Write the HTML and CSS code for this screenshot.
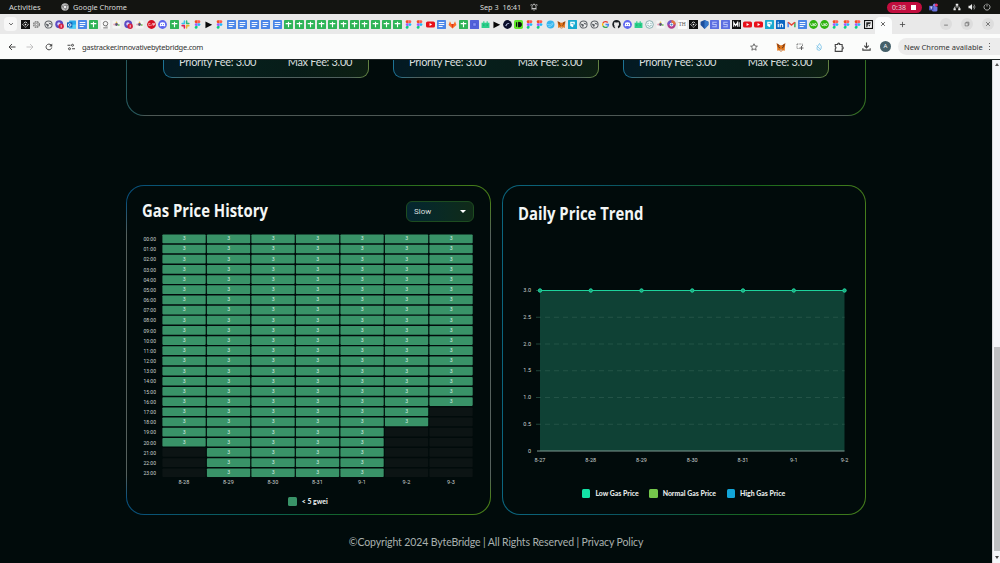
FILE: index.html
```html
<!DOCTYPE html>
<html lang="en">
<head>
  <meta charset="UTF-8">
  <meta name="viewport" content="width=device-width, initial-scale=1.0">
  <title>Gas Tracker</title>
  <link rel="stylesheet" href="styles.css">
</head>
<body>
  <svg class="sprite" aria-hidden="true">
    <symbol id="i-box" viewBox="0 0 16 16"><rect width="16" height="16" fill="#111"/><path d="M8 3l5 5-5 5-5-5z" fill="none" stroke="#fff" stroke-width="1.6" stroke-dasharray="4 2"/><circle cx="8" cy="8" r="1.5" fill="#fff"/></symbol>
    <symbol id="i-gear" viewBox="0 0 16 16"><circle cx="8" cy="8" r="5" fill="none" stroke="#777" stroke-width="2.4" stroke-dasharray="3 1"/><circle cx="8" cy="8" r="2.2" fill="none" stroke="#777" stroke-width="1.4"/></symbol>
    <symbol id="i-globe" viewBox="0 0 16 16"><circle cx="8" cy="8" r="6.4" fill="#eee" stroke="#5f6368" stroke-width="1.8"/><path d="M2 6l5 1 2 2-2 4zM8 2l1 3 4 1 1 3-2-1-3-1z" fill="#5f6368"/></symbol>
    <symbol id="i-badge" viewBox="0 0 16 16"><circle cx="7.5" cy="7.5" r="7" fill="#5b4bc4"/><circle cx="7" cy="7" r="3" fill="#ddd8fa"/><circle cx="11" cy="11" r="4.8" fill="#d5203f"/><path d="M11 8.500v5" stroke="#fff" stroke-width="1.4"/></symbol>
    <symbol id="i-outlook" viewBox="0 0 16 16"><rect x="4" y="1" width="12" height="14" rx="1" fill="#28a8ea"/><path d="M4 9l12-1v7H4z" fill="#50d0f5"/><rect y="4" width="9.500" height="9.500" rx="1" fill="#0f64b8"/><circle cx="4.800" cy="8.800" r="2.300" fill="none" stroke="#fff" stroke-width="1.500"/></symbol>
    <symbol id="i-doc" viewBox="0 0 16 16"><rect width="16" height="16" rx="1.500" fill="#4a86e8"/><path d="M3 4.500h10M3 8h10M3 11.500h7" stroke="#fff" stroke-width="1.700"/></symbol>
    <symbol id="i-sheet" viewBox="0 0 16 16"><rect width="16" height="16" rx="1.500" fill="#2fb457"/><path d="M3 6.500h10M8 3v10" stroke="#fff" stroke-width="2"/></symbol>
    <symbol id="i-q" viewBox="0 0 16 16"><rect width="16" height="16" rx="2" fill="#f8f8f8"/><circle cx="8" cy="6.500" r="4" fill="none" stroke="#555" stroke-width="1.400"/><path d="M4 14h8M9 10l2 2" stroke="#555" stroke-width="1.400"/></symbol>
    <symbol id="i-dots" viewBox="0 0 16 16"><rect x="1" y="1" width="14" height="14" fill="#f5f5f5"/><circle cx="8" cy="8" r="2.600" fill="#585070"/><circle cx="4" cy="8" r="1.800" fill="#e8a0b0"/><circle cx="12" cy="9" r="1.800" fill="#80c870"/><circle cx="8" cy="4" r="1.500" fill="#e8c050"/></symbol>
    <symbol id="i-red" viewBox="0 0 16 16"><circle cx="8" cy="8" r="7.800" fill="#d60f20"/><path d="M6 6H3v4h3V8.500M8 10l2-4h1v4M12 10V6h2v2h-2" fill="none" stroke="#fff" stroke-width="1"/></symbol>
    <symbol id="i-discord" viewBox="0 0 16 16"><circle cx="8" cy="8" r="7.800" fill="#5e66ef"/><path d="M4 5q4-2 8 0l1 5-2 1.500-1-1H6l-1 1L3 10z" fill="#fff"/><circle cx="6.200" cy="8.200" r="1" fill="#5e66ef"/><circle cx="9.800" cy="8.200" r="1" fill="#5e66ef"/></symbol>
    <symbol id="i-slack" viewBox="0 0 16 16"><g stroke-width="2.700" stroke-linecap="round"><path d="M6 2v4M2 6.200h3" stroke="#36c5f0"/><path d="M10 2v4M11 6.200h3" stroke="#2eb67d"/><path d="M10 10v4M10 10h4" stroke="#ecb22e"/><path d="M6 10v4M2 10h4" stroke="#e01e5a"/></g></symbol>
    <symbol id="i-figma" viewBox="0 0 16 16"><path d="M8 .5H5.500a2.600 2.600 0 0 0 0 5.200H8z" fill="#f24e1e"/><path d="M8 .5h2.500a2.600 2.600 0 0 1 0 5.200H8z" fill="#ff5c52"/><path d="M8 5.700H5.500a2.500 2.500 0 0 0 0 5H8z" fill="#a259ff"/><circle cx="10.600" cy="8.200" r="2.500" fill="#1abcfe"/><path d="M8 10.700H5.500A2.500 2.500 0 1 0 8 13.200z" fill="#0acf83"/></symbol>
    <symbol id="i-play" viewBox="0 0 16 16"><path d="M2.500 2.500l12 6-12 6z" fill="#080808"/></symbol>
    <symbol id="i-yt" viewBox="0 0 16 16"><rect y="2.500" width="16" height="11" rx="3" fill="#e8101a"/><path d="M6.300 5.500l4.500 2.500-4.500 2.500z" fill="#fff"/></symbol>
    <symbol id="i-gitlab" viewBox="0 0 16 16"><path d="M1 9L3.500 2 6 7h4l2.500-5L15 9l-7 6z" fill="#fc6d26"/><path d="M6 7h4l-2 8z" fill="#d8361c"/></symbol>
    <symbol id="i-blue" viewBox="0 0 16 16"><rect width="16" height="16" rx="1" fill="#5260d9"/><rect x="5" y="5" width="6" height="6" rx="1" fill="#8792f5" stroke="#3645c0"/></symbol>
    <symbol id="i-robot" viewBox="0 0 16 16"><path d="M1 5h3V2h2v3h4V2h2v3h3v9H1z" fill="#2bd08b"/><path d="M5 8v2M11 8v2" stroke="#138a5b" stroke-width="1.500"/></symbol>
    <symbol id="i-dark" viewBox="0 0 16 16"><circle cx="8" cy="8" r="7.800" fill="#0b0e2b"/><path d="M4 10q3-6 8-4-5 0-6 5z" fill="#c9d3f4"/></symbol>
    <symbol id="i-id" viewBox="0 0 16 16"><rect width="16" height="16" rx="3" fill="#62e82c"/><path d="M4.500 4v8M8 4v8q5 0 5-4t-5-4" fill="#111" stroke="#111" stroke-width="2"/></symbol>
    <symbol id="i-bird" viewBox="0 0 16 16"><circle cx="8" cy="8" r="7" fill="#37b5ee"/><path d="M2 8q5 3 11-3M4 12q5 0 9-5" stroke="#8bdafb" stroke-width="1.500" fill="none"/></symbol>
    <symbol id="i-fox" viewBox="0 0 16 16"><path d="M1 2l5 3h4l5-3-1 8 0 4-3-1-2 2H7l-2-2-3 1V10z" fill="#e2761b"/><path d="M1 2l5 3-2 4zM15 2l-5 3 2 4z" fill="#8b4217"/><path d="M6 12h4l-1 3H7z" fill="#cbb8aa"/><path d="M4.500 8.500l2 1M11.500 8.500l-2 1" stroke="#352a25" stroke-width="1.300"/></symbol>
    <symbol id="i-teal" viewBox="0 0 16 16"><rect width="16" height="16" rx="1" fill="#18a9cf"/><path d="M4 3h8v5H8l2 2-2 3-4-3z" fill="#fff"/><path d="M6 6h4" stroke="#18a9cf" stroke-width="1.500"/></symbol>
    <symbol id="i-google" viewBox="0 0 16 16"><g fill="none" stroke-width="2.300"><path d="M12 4.500A5.200 5.200 0 0 0 3.500 5.500" stroke="#ea4335"/><path d="M3.500 5.500a5.200 5.200 0 0 0 0 5" stroke="#fbbc05"/><path d="M3.500 10.500a5.200 5.200 0 0 0 8 1.500" stroke="#34a853"/><path d="M11.500 12A5.200 5.200 0 0 0 13.200 8H8" stroke="#4285f4"/></g></symbol>
    <symbol id="i-github" viewBox="0 0 16 16"><path d="M8 .2a7.800 7.800 0 0 0-2.400 15.100V12.700Q3.700 13 3 11.500 4.500 12 5.800 11 3.500 10 3.500 7.500q0-1 .7-2 0-1 .2-2 1 0 2.200 1h2.800q1-1 2.200-1 .3 1 .2 2 .7 1 .7 2 0 2.500-2.300 3.500.4.500.4 1.500v2.800A7.800 7.800 0 0 0 8 .2z" fill="#1b1f23"/></symbol>
    <symbol id="i-smile" viewBox="0 0 16 16"><circle cx="8" cy="8" r="6.800" fill="#f3fafa" stroke="#6b989b" stroke-width="1.300"/><path d="M4 9q4 4.500 8 0M4.500 6h2M9.500 6h2" fill="none" stroke="#6b989b" stroke-width="1.300"/></symbol>
    <symbol id="i-ring" viewBox="0 0 16 16"><circle cx="8" cy="8" r="5.500" fill="#fff" stroke="#b03c8c" stroke-width="4"/><path d="M2.500 8A5.500 5.500 0 0 1 8 2.500" fill="none" stroke="#6c58cf" stroke-width="4"/><path d="M8 2.500A5.500 5.500 0 0 1 13.500 8" fill="none" stroke="#e6763c" stroke-width="4"/><circle cx="8" cy="8" r="2" fill="#4d87cb"/></symbol>
    <symbol id="i-shield" viewBox="0 0 16 16"><path d="M8 0l7 3v6l-7 7-7-7V3z" fill="#1d4f9c"/><path d="M8 0l7 3v6l-7 7z" fill="#3678c9"/></symbol>
    <symbol id="i-s" viewBox="0 0 16 16"><rect width="16" height="16" rx="1" fill="#5b6ee0"/><path d="M12 4H5v4h6v4H4" stroke="#b8c2fa" stroke-width="1.800" fill="none"/></symbol>
    <symbol id="i-m" viewBox="0 0 16 16"><rect width="16" height="16" fill="#111"/><path d="M3 12V4l3.500 6L10 4v8M12.800 4v8" stroke="#fff" stroke-width="1.800" fill="none"/></symbol>
    <symbol id="i-in" viewBox="0 0 16 16"><rect width="16" height="16" rx="1" fill="#0a66c2"/><path d="M4 6.500V13M4 3v2M7.500 13V6.500M7.500 9q0-2 2.200-2t2.200 2v4" fill="none" stroke="#fff" stroke-width="2"/></symbol>
    <symbol id="i-gmail" viewBox="0 0 16 16"><g fill="none" stroke-width="2.500"><path d="M2 13V4" stroke="#4285f4"/><path d="M14 13V4" stroke="#34a853"/><path d="M2 4l6 5 6-5" stroke="#ea4335"/></g></symbol>
    <symbol id="i-up" viewBox="0 0 16 16"><circle cx="8" cy="8" r="7.800" fill="#2eb30e"/><path d="M3 6v2q0 2 2 2t2-2V6q2 4 4 4t2-2-2-2-3 5" fill="none" stroke="#fff" stroke-width="1.300"/></symbol>
    <symbol id="i-page" viewBox="0 0 16 16"><rect x="1" y="1" width="14" height="14" fill="#fff" stroke="#111" stroke-width="2"/><path d="M4 4h8v2L7 8l-1 5H4zM8 9l4-1-3 4z" fill="#222"/></symbol>
  </svg>

  <div class="desktop-bar">
    <span class="activities">Activities</span>
    <svg class="chrome-icon" viewBox="0 0 16 16"><circle cx="8" cy="8" r="7.500" fill="#bbb"/><path d="M8 4.500h6.500M5 10L2 4.500M11 10l-3 5.500" stroke="#555" stroke-width="1.300"/><circle cx="8" cy="8" r="3.300" fill="#eee" stroke="#555"/></svg>
    <span>Google Chrome</span>
    <div class="clock">
      <span>Sep 3</span><span>16:41</span>
      <svg viewBox="0 0 16 16"><path d="M4 11V6q0-3 4-3t4 3v5zM2.500 12h11M7 14.500h2M8 1v2M3 2L1.500 5M13 2l1.500 3" fill="none" stroke="#ddd" stroke-width="1.500"/></svg>
    </div>
    <div class="tray">
      <span class="record">0:38 <i></i></span>
      <svg class="teams" viewBox="0 0 16 16"><circle cx="10" cy="4" r="3" fill="#7b83eb"/><rect x="5" y="6" width="10" height="9" rx="2" fill="#6b72dd"/><rect y="5" width="8" height="8" fill="#4450b8"/><path d="M2 7h4M4 7v4" stroke="#fff" stroke-width="1.300"/><circle cx="13" cy="3.500" r="2.800" fill="#e4336b"/></svg>
      <svg viewBox="0 0 16 16"><path d="M5.500 1.500h5v4h-5zM1 10.500h4.500v4H1zM10.500 10.500H15v4h-4.500z" fill="#eee"/><path d="M8 5v3M3 11V8h10v3" fill="none" stroke="#eee" stroke-width="1.200"/></svg>
      <svg viewBox="0 0 16 16"><path d="M1 5.500h3L8 2v12l-4-3.500H1z" fill="#eee"/><path d="M10 5.500q2 2.500 0 5M12 3q4 5 0 10" fill="none" stroke="#ccc" stroke-width="1.300"/></svg>
      <svg viewBox="0 0 16 16"><path d="M5 3a6 6 0 1 0 6 0M8 1v6" fill="none" stroke="#ddd" stroke-width="1.500"/></svg>
    </div>
  </div>

  <div class="tab-strip">
    <span class="tab-search"><svg viewBox="0 0 16 16"><path d="M3 5.500l5 5 5-5" fill="none" stroke="#333" stroke-width="2"/></svg></span>
    <div class="tabs wide" id="tabs-left"></div>
    <div class="tabs" id="tabs-right"></div>
    <div class="tab-active"><svg viewBox="0 0 16 16"><path d="M3 3l10 10M13 3L3 13" stroke="#333" stroke-width="2"/></svg></div>
    <svg class="new-tab" viewBox="0 0 16 16"><path d="M8 2v12M2 8h12" stroke="#444" stroke-width="1.800"/></svg>
    <div class="window-buttons">
      <span><svg viewBox="0 0 16 16"><path d="M3 11h10" stroke="#555" stroke-width="1.800"/></svg></span>
      <span><svg viewBox="0 0 16 16"><path d="M3 5h8v8H3zM6 5V3h7v8h-2" fill="none" stroke="#555" stroke-width="1.500"/></svg></span>
      <span><svg viewBox="0 0 16 16"><path d="M3 3l10 10M13 3L3 13" stroke="#444" stroke-width="1.800"/></svg></span>
    </div>
  </div>

  <div class="toolbar">
    <svg class="back" viewBox="0 0 16 16"><path d="M15 8H2M8 2L2 8l6 6" fill="none" stroke="#444" stroke-width="2"/></svg>
    <svg class="forward" viewBox="0 0 16 16"><path d="M1 8h13M8 2l6 6-6 6" fill="none" stroke="#bbb" stroke-width="1.700"/></svg>
    <svg class="reload" viewBox="0 0 16 16"><path d="M13.500 9A5.700 5.700 0 1 1 12 4l2 2" fill="none" stroke="#444" stroke-width="2"/><path d="M14.500 1v6h-6z" fill="#444"/></svg>
    <svg class="site" viewBox="0 0 16 16"><path d="M1 4.500h6M10 11.500h6" stroke="#444" stroke-width="2"/><circle cx="11" cy="4.500" r="2" fill="none" stroke="#444" stroke-width="2"/><circle cx="5" cy="11.500" r="2" fill="none" stroke="#444" stroke-width="2"/></svg>
    <span class="url">gastracker.innovativebytebridge.com</span>
    <div class="extensions">
      <svg viewBox="0 0 16 16"><path d="M8 1.500l2 4.500 4.800.4-3.600 3.200 1.100 4.800L8 11.900l-4.300 2.500 1.100-4.800L1.200 6.400 6 6z" fill="none" stroke="#444" stroke-width="1.500"/></svg>
      <svg class="ext-fox"><use href="#i-fox"/></svg>
      <svg viewBox="0 0 16 16"><path d="M2 2h11v5M2 2v9h5" fill="none" stroke="#555" stroke-width="1.500" stroke-dasharray="2 1.300"/><path d="M7 10h8M11 6v8" stroke="#555" stroke-width="1.800"/></svg>
      <svg viewBox="0 0 16 16"><path d="M9 1q6 6 3 11t-8 1Q2 9 9 1zM3 5l9 9" fill="#f0f8fc" stroke="#72bde4" stroke-width="1.500"/></svg>
      <svg class="puzzle" viewBox="0 0 16 16"><path d="M2 4h4V2.500q1.500-1.500 3 0V4h4v4h1q1.500 1.500 0 3h-1v4H2v-4q2.500-1.500 0-3.500z" fill="none" stroke="#444" stroke-width="1.800"/></svg>
      <svg class="download" viewBox="0 0 16 16"><path d="M8 1v9M4 6.500l4 4 4-4M1.500 11v3.500h13V11" fill="none" stroke="#444" stroke-width="2"/></svg>
      <span class="avatar">A</span>
      <span class="update">New Chrome available <b></b></span>
    </div>
  </div>

  <div class="viewport">
    <main class="page">
      <section class="panel fees">
        <div class="fee-card"><span>Priority Fee: 3.00</span><span>Max Fee: 3.00</span></div>
        <div class="fee-card"><span>Priority Fee: 3.00</span><span>Max Fee: 3.00</span></div>
        <div class="fee-card"><span>Priority Fee: 3.00</span><span>Max Fee: 3.00</span></div>
      </section>

      <div class="charts">
        <section class="panel history">
          <header>
            <h2>Gas Price History</h2>
            <div class="select">Slow <i></i></div>
          </header>
          <svg class="heatmap" id="heatmap" width="346" height="256"></svg>
          <div class="legend"><span class="fair">&lt; 5 gwei</span></div>
        </section>

        <section class="panel trend">
          <h2>Daily Price Trend</h2>
          <svg class="area" id="area" width="346" height="196"></svg>
          <div class="legend">
            <span class="low">Low Gas Price</span>
            <span class="normal">Normal Gas Price</span>
            <span class="high">High Gas Price</span>
          </div>
        </section>
      </div>

      <footer>©Copyright 2024 ByteBridge | All Rights Reserved | Privacy Policy</footer>
    </main>
    <div class="scrollbar"><i class="up"></i><div class="thumb"></div><i class="down"></i></div>
  </div>

  <script src="script.js"></script>
</body>
</html>
```

FILE: styles.css
```css
* {
  box-sizing: border-box;
}
body {
  margin: 0;
  width: 1000px;
  height: 563px;
  overflow: hidden;
  display: flex;
  flex-direction: column;
  background: #010b0b;
  font-family: "Noto Sans", sans-serif;
}
svg {
  display: block;
  flex: none;
}
.sprite {
  position: absolute;
  width: 0;
  height: 0;
}

/* desktop bar */
.desktop-bar {
  height: 14px;
  flex: none;
  display: flex;
  align-items: center;
  background: #131411;
  color: #dcdcda;
  font-size: 7.3px;
  padding-left: 9px;
}
.desktop-bar svg {
  width: 8px;
  height: 8px;
}
.activities {
  width: 52px;
  font-size: 7.6px;
}
.desktop-bar .chrome-icon {
  margin-right: 4px;
}
.clock {
  display: flex;
  align-items: center;
  gap: 4px;
  margin-left: 353px;
}
.clock svg {
  margin-left: 5px;
}
.tray {
  display: flex;
  align-items: center;
  gap: 7px;
  margin-left: auto;
  padding-right: 9px;
}
.record {
  display: flex;
  align-items: center;
  gap: 5px;
  width: 35px;
  height: 11px;
  padding-left: 5px;
  border-radius: 6px;
  background: #c20d3e;
  font-size: 7px;
}
.record i {
  width: 5px;
  height: 5px;
  background: #fff;
}
.tray .teams {
  width: 9px;
  height: 9px;
  margin: 0 8px 0 0;
}

/* browser tabs */
.tab-strip {
  height: 20px;
  flex: none;
  display: flex;
  align-items: center;
  background: #e9e9e9;
  padding-left: 4px;
}
.tab-search {
  width: 13px;
  height: 14px;
  border-radius: 4px;
  background: #f7f7f7;
  display: grid;
  place-items: center;
  margin-right: 2.500px;
}
.tab-search svg {
  width: 6px;
  height: 6px;
}
.tabs {
  display: grid;
  grid-auto-flow: column;
  grid-auto-columns: 10.95px;
  justify-items: center;
  align-items: center;
}
.tabs.wide {
  grid-auto-columns: 11.46px;
}
.tabs svg {
  width: 9px;
  height: 9px;
}
.tab-text {
  width: 9px;
  background: #fbfbfb;
  color: #555;
  font: 5.5px/9px "Liberation Serif", serif;
  text-align: center;
}
.tab-active {
  width: 17px;
  height: 17px;
  margin: 3px 0 0 1px;
  border-radius: 5px 5px 0 0;
  background: #fbfcfc;
  display: grid;
  place-items: center;
}
.tab-active svg {
  width: 6px;
  height: 6px;
  margin-top: -3px;
}
.new-tab {
  width: 7px;
  height: 7px;
  margin-left: 7px;
}
.window-buttons {
  display: flex;
  gap: 9px;
  margin-left: auto;
  padding-right: 6px;
}
.window-buttons span {
  width: 12px;
  height: 12px;
  border-radius: 50%;
  background: #dddddd;
  display: grid;
  place-items: center;
}
.window-buttons svg {
  width: 6px;
  height: 6px;
}

/* address bar */
.toolbar {
  height: 25px;
  flex: none;
  display: flex;
  align-items: center;
  background: #fbfcfb;
  padding-left: 8px;
  font-size: 7.5px;
  color: #333;
}
.toolbar svg {
  width: 8px;
  height: 8px;
}
.toolbar .forward {
  margin-left: 10px;
}
.toolbar .reload {
  margin-left: 11px;
}
.toolbar .site {
  margin-left: 14px;
}
.url {
  margin-left: 7px;
  letter-spacing: -.25px;
}
.extensions {
  display: flex;
  align-items: center;
  margin-left: auto;
}
.extensions svg {
  margin-right: 11px;
}
.extensions .ext-fox {
  width: 10px;
  height: 10px;
  margin-left: 6px;
  margin-right: 10px;
}
.extensions .puzzle {
  width: 10px;
  height: 10px;
  margin-right: 18px;
}
.extensions .download {
  width: 9px;
  height: 9px;
  margin-right: 9px;
}
.extensions svg:first-child {
  margin-right: 12px;
}
.avatar {
  width: 11px;
  height: 11px;
  border-radius: 50%;
  background: #45606a;
  color: #fff;
  font-size: 6px;
  line-height: 11px;
  text-align: center;
  margin-right: 7px;
}
.update {
  display: flex;
  align-items: center;
  justify-content: space-between;
  width: 102px;
  height: 17px;
  padding: 0 10px 0 6px;
  border-radius: 9px 0 0 9px;
  background: #ececec;
  white-space: nowrap;
}
.update b {
  width: 1.5px;
  height: 1.5px;
  border-radius: 50%;
  background: #333;
  box-shadow: 0 -3px #333, 0 3px #333;
}

/* page */
.viewport {
  flex: 1;
  display: flex;
  overflow: hidden;
  border-top: 1px solid #1b2222;
}
.page {
  flex: 1;
  padding-left: 126px;
  font-family: Lato, sans-serif;
  color: #d9dfde;
}
.panel {
  border: 1px solid transparent;
  border-radius: 18px;
}
.fees {
  width: 740px;
  height: 56px;
  display: flex;
  align-items: flex-end;
  gap: 24px;
  padding: 0 36px 37px;
  border-top: 0;
  border-radius: 0 0 18px 18px;
  background:
    linear-gradient(#010b0b, #010b0b) padding-box,
    linear-gradient(90deg, transparent, #4d5855 3%, #4d5855 97%, transparent) bottom / 100% 1px no-repeat border-box,
    linear-gradient(90deg, #27595e, #357023) border-box;
}
.fee-card {
  flex: 1;
  height: 60px;
  display: flex;
  justify-content: space-between;
  align-items: flex-end;
  padding: 0 16px 9px 15px;
  border: 1px solid transparent;
  border-radius: 9px;
  background:
    linear-gradient(90deg, #031923, #06201d 30%, #071c18 65%, #0d1f12) padding-box,
    linear-gradient(90deg, transparent, #50605e 12%, #50605e 90%, transparent) bottom / 100% 1px no-repeat border-box,
    linear-gradient(90deg, #1d7396, #638343) border-box;
  font-size: 11px;
  line-height: 13px;
  letter-spacing: -.32px;
}
.charts {
  display: flex;
  gap: 11px;
  margin-top: 69px;
}
.charts .panel {
  width: 365px;
  height: 330px;
}
.charts .trend {
  width: 364px;
}
.history {
  padding: 14px 16px 0 15px;
  background:
    linear-gradient(#010b0b, #010b0b) padding-box,
    linear-gradient(transparent 5%, #56615e 15%, #56615e 88%, transparent 95%) left / 1px 100% no-repeat border-box,
    linear-gradient(transparent 5%, #56615e 15%, #56615e 88%, transparent 95%) right / 1px 100% no-repeat border-box,
    linear-gradient(90deg, #09507d, #096058 35%, #166421 65%, #4b8019) border-box;
}
.trend {
  padding: 14px 15px 0 15px;
  background:
    linear-gradient(#010b0b, #010b0b) padding-box,
    linear-gradient(90deg, #0b657e, #0a5560 35%, #19681c 70%, #457d1c) border-box;
}
.panel h2 {
  margin: 0;
  color: #f3f6f5;
  font-family: "Open Sans", sans-serif;
  font-size: 18px;
  line-height: 20px;
  font-weight: 700;
  width: max-content;
  transform: scaleX(.825);
  transform-origin: left;
}
.trend h2 {
  margin-top: 2px;
  line-height: 22px;
}
.history header {
  display: flex;
  justify-content: space-between;
  height: 22px;
}
.select {
  width: 68px;
  height: 21px;
  display: flex;
  align-items: center;
  justify-content: space-between;
  margin-top: 1px;
  padding: 0 7px;
  border: 1px solid #1d4c20;
  border-radius: 6px;
  background: linear-gradient(90deg, #042630, #0a2a22 60%, #102a18);
  font-family: Roboto, sans-serif;
  font-size: 8px;
}
.select i {
  border: 3px solid transparent;
  border-top-color: #fff;
  border-bottom: 0;
}
.heatmap {
  margin-top: 11px;
}
.area {
  margin-top: 51px;
}
.chart-label {
  font-family: Roboto, sans-serif;
  font-size: 5.5px;
  fill: #cdd4d2;
}
.cell {
  fill: #399368;
}
.cell-empty {
  fill: #0c1414;
}
.cell-value {
  font-family: Roboto, sans-serif;
  font-size: 5.2px;
  fill: #d5ebe0;
  text-anchor: middle;
}
.area-fill {
  fill: #0f4135;
}
.split-line {
  stroke: #2c5c4f;
  stroke-width: .7;
  stroke-dasharray: 5 4;
}
.axis {
  stroke: #7f9b93;
}
.line {
  stroke: #1dd39c;
  stroke-width: 1.2;
}
.point {
  fill: #19a57c;
  stroke: #23dca4;
}
.legend {
  display: flex;
  justify-content: center;
  gap: 10.5px;
  font-size: 6.9px;
  font-weight: 900;
  line-height: 9px;
  color: #e5eae9;
}
.history .legend {
  margin-top: 8px;
  padding-right: 0;
}
.trend .legend {
  margin-top: 18px;
  padding-right: 1px;
}
.legend span {
  display: flex;
  align-items: center;
}
.legend span::before {
  content: "";
  width: 8.5px;
  height: 8.5px;
  border-radius: 1.5px;
  margin-right: 5px;
}
.fair::before {
  background: #399368;
}
.low::before {
  background: #12e2a5;
}
.normal::before {
  background: #74c74b;
}
.high::before {
  background: #12a5d8;
}
footer {
  width: 740px;
  margin-top: 20px;
  text-align: center;
  font-size: 10.5px;
  letter-spacing: -.12px;
  line-height: 14px;
  color: #a9b1af;
}

/* scrollbar */
.scrollbar {
  width: 8px;
  flex: none;
  display: flex;
  flex-direction: column;
  align-items: center;
  justify-content: space-between;
  background: #f4f5f8;
  border-left: 1px solid #d9dadc;
  padding: 3px 0 4px;
}
.scrollbar i {
  border: 2px solid transparent;
}
.scrollbar .up {
  border-bottom: 3px solid #555;
  border-top: 0;
}
.scrollbar .down {
  border-top: 3px solid #444;
  border-bottom: 0;
}
.thumb {
  width: 6px;
  height: 204px;
  margin: auto 0 5px;
  background: #bfc0c2;
}
```

FILE: script.js
```js
const leftTabs = 'box gear globe badge outlook doc sheet q dots badge dots red discord sheet slack figma play figma doc doc doc doc doc';
const rightTabs = 'sheet sheet sheet sheet sheet sheet sheet sheet sheet sheet sheet figma figma yt doc gitlab sheet blue robot play dark id figma figma bird fox teal globe globe google github discord robot smile dots ring TH box shield s s m yt yt teal in gmail doc up up figma figma figma page';

function drawTabs(id, names) {
  document.getElementById(id).innerHTML = names.split(' ')
    .map(name => name === 'TH' ? '<span class="tab-text">TH</span>' : `<svg><use href="#i-${name}"/></svg>`)
    .join('');
}

// Heatmap: one column per day, number of hours that have a price
const days = [
  ['8-28', 21], ['8-29', 24], ['8-30', 24], ['8-31', 24],
  ['9-1', 24], ['9-2', 19], ['9-3', 17]
];

function drawHeatmap() {
  const left = 20.4, colW = 44.5, rowH = 10.17;
  let out = '';
  for (let hour = 0; hour < 24; hour++) {
    const y = 1.5 + hour * rowH;
    out += `<text class="chart-label" x="14" y="${y + 6.6}" text-anchor="end" textLength="12.5" lengthAdjust="spacingAndGlyphs">${String(hour).padStart(2, '0')}:00</text>`;
    days.forEach(([, hours], col) => {
      const x = left + col * colW;
      const filled = hour < hours;
      out += `<rect class="${filled ? 'cell' : 'cell-empty'}" x="${x}" y="${y}" width="43.3" height="8.7" rx=".8"/>`;
      if (filled) out += `<text class="cell-value" x="${x + 21.8}" y="${y + 5.8}">3</text>`;
    });
  }
  days.forEach(([day], col) => {
    out += `<text class="chart-label" x="${left + col * colW + 21.5}" y="251" text-anchor="middle">${day}</text>`;
  });
  document.getElementById('heatmap').innerHTML = out;
}

function drawArea() {
  const labels = ['8-27', '8-28', '8-29', '8-30', '8-31', '9-1', '9-2'];
  const x0 = 22, step = 50.75, top = 15.5, bottom = 176;
  const right = x0 + step * 6;
  let out = `<rect class="area-fill" x="${x0}" y="${top}" width="${right - x0}" height="${bottom - top}"/>`;
  ['0', '0.5', '1.0', '1.5', '2.0', '2.5', '3.0'].forEach((value, i) => {
    const y = bottom - i * (bottom - top) / 6;
    out += `<text class="chart-label" x="13" y="${y + 1.5}" text-anchor="end">${value}</text>`;
    if (i) out += `<line class="split-line" x1="${x0 - 4}" x2="${right}" y1="${y}" y2="${y}"/>`;
  });
  out += `<line class="axis" x1="${x0 - 3}" x2="${right}" y1="${bottom}" y2="${bottom}"/>`;
  out += `<line class="line" x1="${x0}" x2="${right}" y1="${top}" y2="${top}"/>`;
  labels.forEach((label, i) => {
    const x = x0 + i * step;
    out += `<circle class="point" cx="${x}" cy="${top}" r="1.7"/>`;
    out += `<text class="chart-label" x="${x}" y="186.5" text-anchor="middle">${label}</text>`;
  });
  document.getElementById('area').innerHTML = out;
}

drawTabs('tabs-left', leftTabs);
drawTabs('tabs-right', rightTabs);
drawHeatmap();
drawArea();
```
